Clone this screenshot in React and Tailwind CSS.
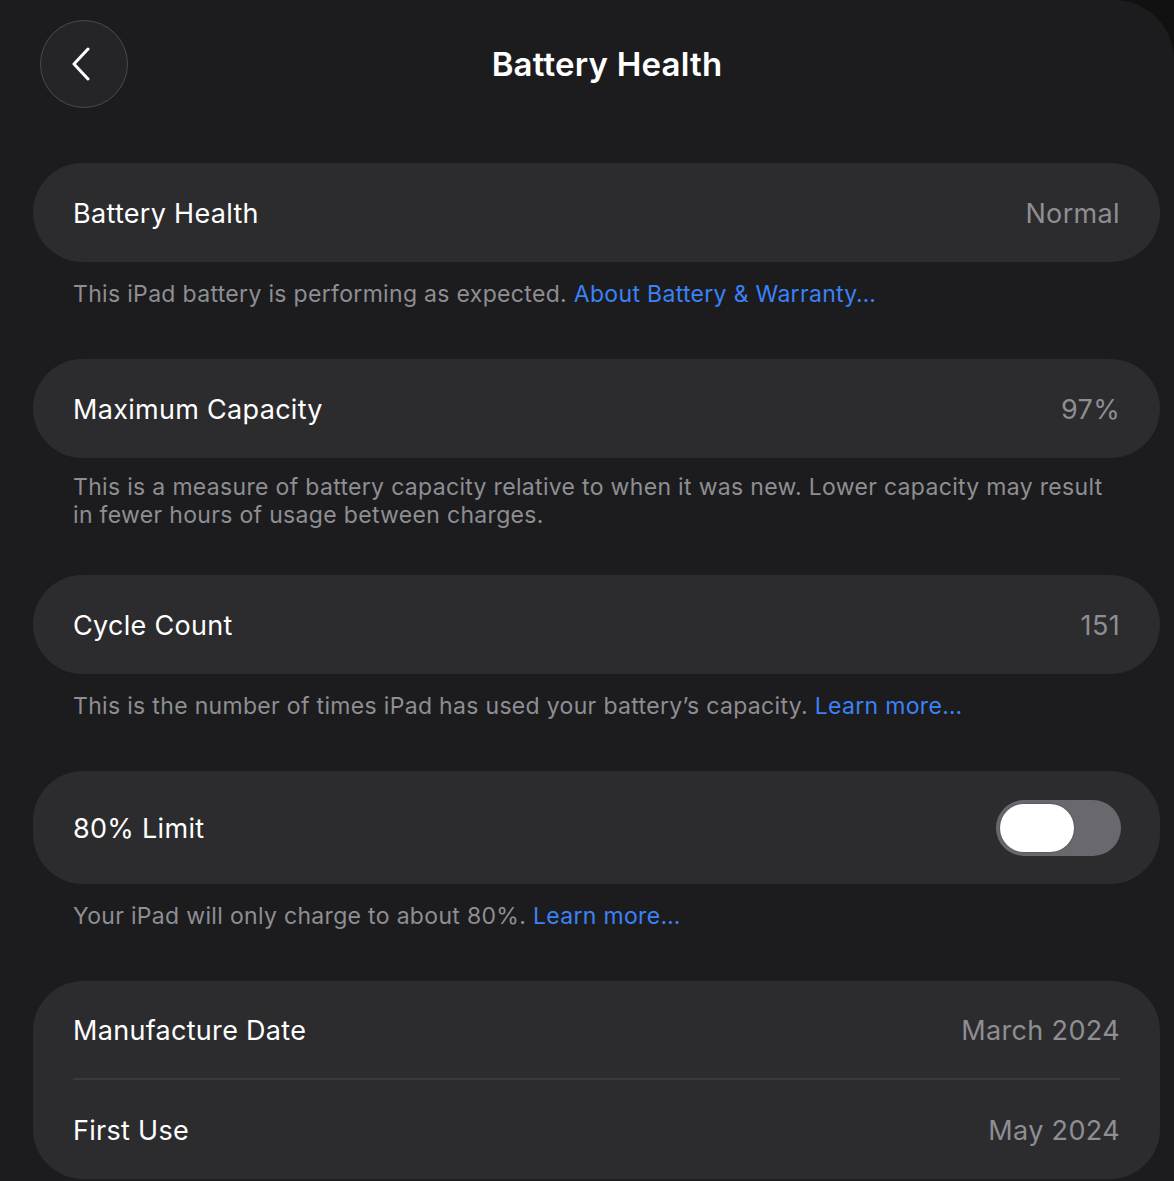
import React from "react";

const font = { fontFamily: "Inter, 'Noto Sans', sans-serif" };

function Row({ label, value, children, tall }) {
  return (
    <div className={`flex items-center justify-between px-10 pt-[3px] ${tall ? "h-[113px]" : "h-[99px]"}`}>
      <span className="text-[27px] text-white tracking-[0.3px]">{label}</span>
      {children ? children : <span className="text-[27px] text-[#8e8e93] tracking-[0.35px]">{value}</span>}
    </div>
  );
}

function Card({ children }) {
  return <div className="bg-[#2c2c2e] rounded-[50px]">{children}</div>;
}

function Footer({ children, pt = "pt-[18px]" }) {
  return (
    <div className={`px-10 ${pt} text-[23px] leading-[28px] text-[#8e8e93] tracking-[0.32px]`}>{children}</div>
  );
}

export default function App() {
  return (
    <div className="bg-[#111112] w-[1174px] h-[1181px] overflow-hidden" style={font}>
      <div className="bg-[#1c1c1e] rounded-tr-[60px] h-full pl-[33px] pr-[14px]">
        <div className="relative h-[163px]">
          <div className="absolute left-[7px] top-[20px] w-[88px] h-[88px] rounded-full bg-[#252527] border-[1.5px] border-[#4a4a4d] flex items-center justify-center">
            <svg width="20" height="34" viewBox="0 0 20 34" className="-ml-[6px]">
              <path d="M17 2 L3 17 L17 32" stroke="white" strokeWidth="3" fill="none" strokeLinecap="round" strokeLinejoin="round" />
            </svg>
          </div>
          <div className="absolute left-0 right-0 top-[41px] text-center text-white text-[33px] font-semibold leading-[46px] pl-[21px] tracking-[0.2px]">
            Battery Health
          </div>
        </div>

        <Card>
          <Row label="Battery Health" value="Normal" />
        </Card>
        <Footer>
          This iPad battery is performing as expected. <span className="text-[#3b82f6]">About Battery &amp; Warranty…</span>
        </Footer>

        <div className="h-[51px]" />
        <Card>
          <Row label="Maximum Capacity" value="97%" />
        </Card>
        <Footer pt="pt-[15px]">
          This is a measure of battery capacity relative to when it was new. Lower capacity may result
          <br />
          in fewer hours of usage between charges.
        </Footer>

        <div className="h-[46px]" />
        <Card>
          <Row label="Cycle Count" value="151" />
        </Card>
        <Footer>
          This is the number of times iPad has used your battery’s capacity. <span className="text-[#3b82f6]">Learn more…</span>
        </Footer>

        <div className="h-[51px]" />
        <Card>
          <Row label="80% Limit" tall>
            <div className="w-[125px] h-[56px] rounded-full bg-[#69686e] p-[4px] -mr-[1px] -mt-[3px]">
              <div className="w-[74px] h-[48px] rounded-full bg-white shadow-[0_0_2px_rgba(0,0,0,0.4)]" />
            </div>
          </Row>
        </Card>
        <Footer>
          Your iPad will only charge to about 80%. <span className="text-[#3b82f6]">Learn more…</span>
        </Footer>

        <div className="h-[51px]" />
        <div className="bg-[#2c2c2e] rounded-[50px] h-[198px] px-10">
          <div className="flex items-center justify-between h-[99px] pt-[3px] border-b-2 border-[#3a3a3c]">
            <span className="text-[27px] text-white tracking-[0.3px]">Manufacture Date</span>
            <span className="text-[27px] text-[#8e8e93] tracking-[0.35px]">March 2024</span>
          </div>
          <div className="flex items-center justify-between h-[99px] pt-[3px]">
            <span className="text-[27px] text-white tracking-[0.3px]">First Use</span>
            <span className="text-[27px] text-[#8e8e93] tracking-[0.35px]">May 2024</span>
          </div>
        </div>
      </div>
    </div>
  );
}
